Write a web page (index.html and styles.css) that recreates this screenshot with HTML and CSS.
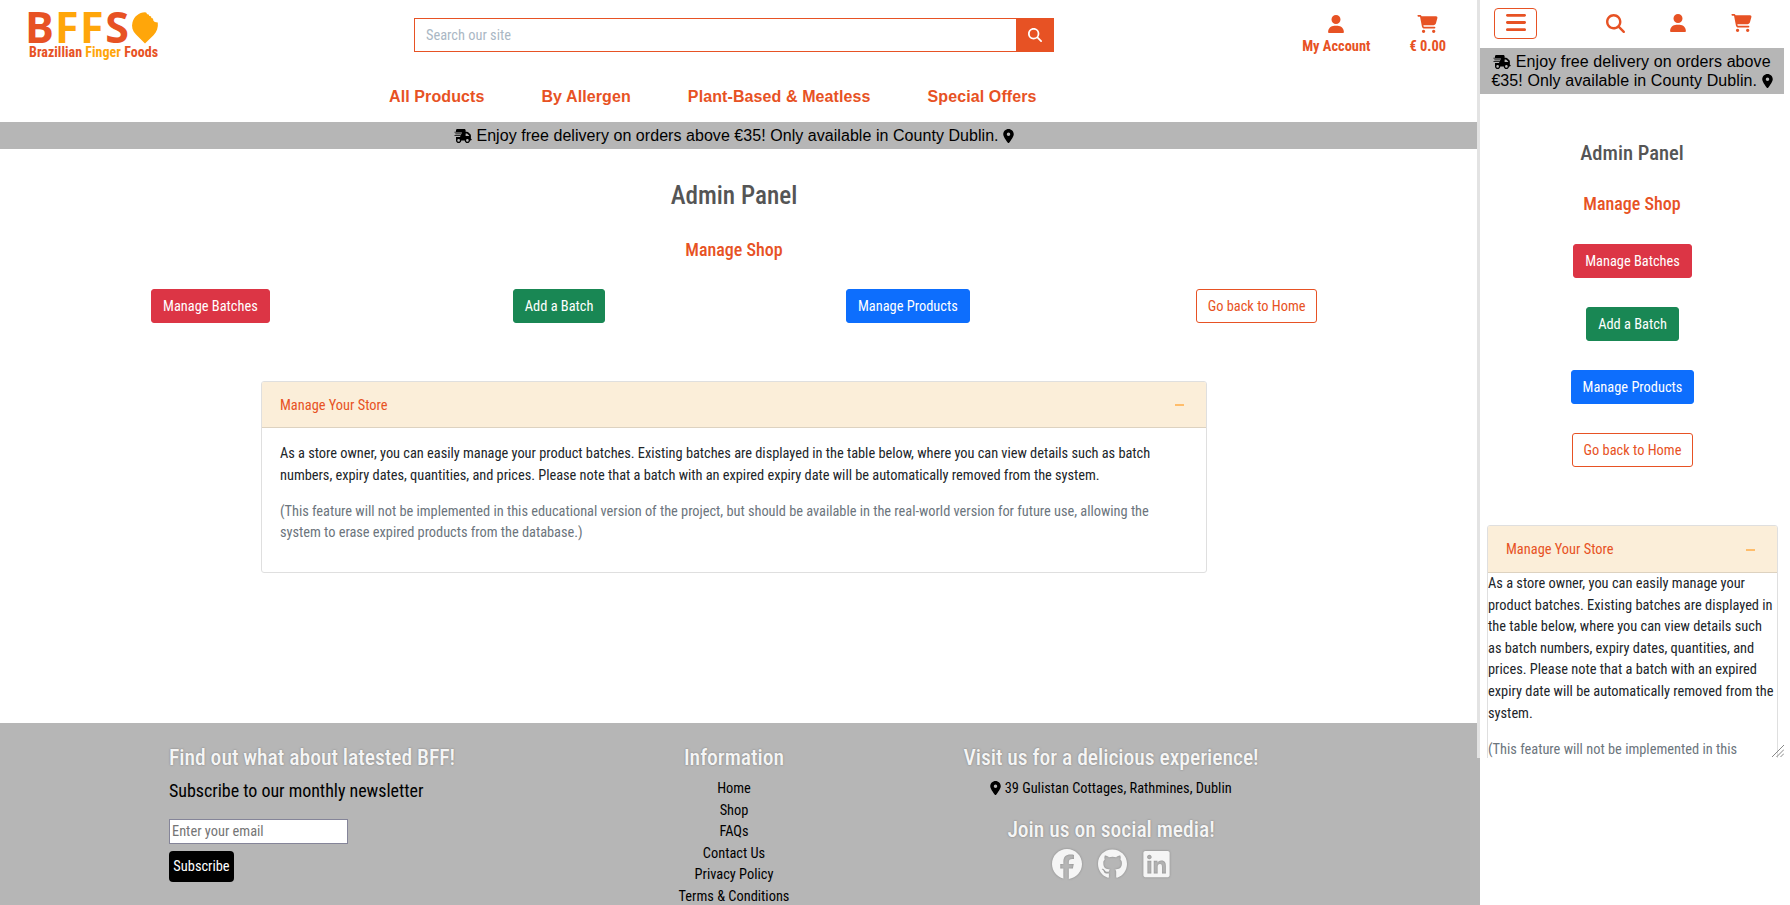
FILE: index.html
```html
<!DOCTYPE html>
<html lang="en">
<head>
<meta charset="utf-8">
<title>Admin Panel - Brazillian Finger Foods</title>
<link rel="stylesheet" href="styles.css">
</head>
<body>
<svg class="sprite" aria-hidden="true">
  <symbol id="user" viewBox="0 0 448 512"><path d="M224 256A128 128 0 1 0 224 0a128 128 0 1 0 0 256zm-45.700 48C79.800 304 0 383.800 0 482.300C0 498.700 13.300 512 29.700 512H418.300c16.400 0 29.700-13.300 29.700-29.700C448 383.800 368.200 304 269.700 304H178.300z"/></symbol>
  <symbol id="cart" viewBox="0 0 576 512"><path d="M0 24C0 10.700 10.700 0 24 0H69.500c22 0 41.500 12.800 50.600 32h411c26.300 0 45.500 25 38.600 50.400l-41 152.300c-8.500 31.400-37 53.300-69.500 53.300H170.700l5.400 28.500c2.200 11.300 12.100 19.500 23.600 19.500H488c13.300 0 24 10.700 24 24s-10.700 24-24 24H199.700c-34.600 0-64.300-24.600-70.700-58.500L77.400 54.500c-.7-3.800-4-6.500-7.900-6.500H24C10.700 48 0 37.300 0 24zM128 464a48 48 0 1 1 96 0 48 48 0 1 1 -96 0zm336-48a48 48 0 1 1 0 96 48 48 0 1 1 0-96z"/></symbol>
  <symbol id="search" viewBox="0 0 512 512"><path d="M416 208c0 45.900-14.900 88.300-40 122.700L502.600 457.400c12.500 12.500 12.500 32.800 0 45.300s-32.800 12.500-45.300 0L330.700 376c-34.400 25.200-76.800 40-122.700 40C93.100 416 0 322.900 0 208S93.100 0 208 0S416 93.100 416 208zM208 352a144 144 0 1 0 0-288 144 144 0 1 0 0 288z"/></symbol>
  <symbol id="bars" viewBox="0 0 448 512"><path d="M0 96C0 78.300 14.300 64 32 64H416c17.700 0 32 14.300 32 32s-14.300 32-32 32H32C14.300 128 0 113.700 0 96zM0 256c0-17.700 14.300-32 32-32H416c17.700 0 32 14.300 32 32s-14.300 32-32 32H32c-17.700 0-32-14.300-32-32zM448 416c0 17.700-14.300 32-32 32H32c-17.700 0-32-14.300-32-32s14.300-32 32-32H416c17.700 0 32 14.300 32 32z"/></symbol>
  <symbol id="pin" viewBox="0 0 384 512"><path d="M215.700 499.200C267 435 384 279.400 384 192C384 86 298 0 192 0S0 86 0 192c0 87.400 117 243 168.300 307.200c12.300 15.300 35.100 15.300 47.400 0zM192 128a64 64 0 1 1 0 128 64 64 0 1 1 0-128z"/></symbol>
  <symbol id="truck" viewBox="0 0 640 512"><path d="M112 0C85.500 0 64 21.500 64 48V96H16c-8.800 0-16 7.200-16 16s7.200 16 16 16H272c8.800 0 16 7.200 16 16s-7.200 16-16 16H48c-8.800 0-16 7.200-16 16s7.200 16 16 16H240c8.800 0 16 7.200 16 16s-7.200 16-16 16H16c-8.800 0-16 7.200-16 16s7.200 16 16 16H208c8.800 0 16 7.200 16 16s-7.200 16-16 16H64V416c0 53 43 96 96 96s96-43 96-96H384c0 53 43 96 96 96s96-43 96-96h32c17.700 0 32-14.300 32-32s-14.300-32-32-32V237.300c0-17-6.700-33.300-18.700-45.300L512 114.700c-12-12-28.300-18.700-45.300-18.700H416V48c0-26.500-21.500-48-48-48H112zM544 237.300V256H416V160h50.700L544 237.300zM160 368a48 48 0 1 1 0 96 48 48 0 1 1 0-96zm272 48a48 48 0 1 1 96 0 48 48 0 1 1 -96 0z"/></symbol>
  <symbol id="facebook" viewBox="0 0 512 512"><path d="M512 256C512 114.600 397.400 0 256 0S0 114.600 0 256C0 376 82.700 476.800 194.200 504.500V334.200H141.400V256h52.800V222.300c0-87.100 39.400-127.500 125-127.500c16.200 0 44.200 3.200 55.700 6.400V172c-6-.6-16.500-1-29.600-1c-42 0-58.200 15.900-58.200 57.200V256h83.600l-14.400 78.200H287V510.100C413.800 494.800 512 386.900 512 256z"/></symbol>
  <symbol id="github" viewBox="0 0 496 512"><path d="M244.800 8C106.100 8 0 113.300 0 252c0 110.900 69.800 205.800 169.500 239.200 12.800 2.300 17.300-5.600 17.300-12.100 0-6.200-.3-40.400-.3-61.400 0 0-70 15-84.700-29.800 0 0-11.400-29.100-27.800-36.600 0 0-22.900-15.700 1.600-15.400 0 0 24.900 2 38.600 25.800 21.900 38.600 58.600 27.500 72.900 20.900 2.300-16 8.800-27.100 16-33.700-55.900-6.200-112.300-14.300-112.300-110.500 0-27.500 7.600-41.300 23.600-58.900-2.600-6.500-11.100-33.300 2.600-67.900 20.900-6.500 69 27 69 27 20-5.600 41.500-8.500 62.800-8.500s42.800 2.900 62.800 8.500c0 0 48.100-33.600 69-27 13.700 34.700 5.200 61.400 2.600 67.900 16 17.700 25.800 31.500 25.800 58.900 0 96.500-58.900 104.200-114.800 110.500 9.200 7.900 17 22.900 17 46.400 0 33.700-.3 75.400-.3 83.600 0 6.500 4.600 14.400 17.300 12.100C428.200 457.800 496 362.900 496 252 496 113.300 383.500 8 244.800 8z"/></symbol>
  <symbol id="linkedin" viewBox="0 0 448 512"><path d="M416 32H31.900C14.300 32 0 46.500 0 64.300v383.400C0 465.500 14.300 480 31.900 480H416c17.600 0 32-14.500 32-32.300V64.300c0-17.800-14.400-32.300-32-32.300zM135.400 416H69V202.200h66.500V416zm-33.200-243c-21.300 0-38.500-17.300-38.500-38.500S80.900 96 102.200 96c21.200 0 38.500 17.300 38.500 38.500 0 21.300-17.200 38.500-38.500 38.500zm282.100 243h-66.400V312c0-24.800-.5-56.700-34.500-56.700-34.600 0-39.900 27-39.900 54.900V416h-66.400V202.200h63.700v29.200h.9c8.900-16.800 30.600-34.500 62.900-34.500 67.200 0 79.700 44.300 79.700 101.900V416z"/></symbol>
</svg>

<div class="desktop">
  <header class="topbar">
    <svg class="logo" width="138" height="62" viewBox="0 0 138 62">
      <g class="logo-word"><text x="1.100" y="43" class="red">B</text><text x="31.100" y="43" class="gold">F</text><text x="56.100" y="43" class="gold">F</text><text x="81.200" y="43" class="red">S</text></g>
      <path class="gold" d="M121 12.300c1.300 0 1.800.8 2 2 1.400-.2 2 .5 2.300 1.700 1.500-.3 2.200.6 2 2 1.500 0 2.100.7 1.900 2.200.8 1.500 2.200 2.200 4.600 2.300.6 5-1 9.300-4.300 12.700L121 43.500 112 34.600c-3.600-3.600-4.700-7.900-3.500-12.300 1.600-5.900 6.500-9.700 12.500-10z"/>
      <text x="5" y="57" class="logo-sub" textLength="129"><tspan class="red">Brazillian </tspan><tspan class="gold">Finger </tspan><tspan class="red">Foods</tspan></text>
    </svg>
    <div class="searchbox"><span class="ph">Search our site</span><span class="searchbtn"><svg class="ic" width="14" height="14"><use href="#search"/></svg></span></div>
    <div class="tools">
      <a class="tool"><svg width="16" height="18"><use href="#user"/></svg><span>My Account</span></a>
      <a class="tool"><svg width="21" height="18"><use href="#cart"/></svg><span>€ 0.00</span></a>
    </div>
  </header>
  <nav class="nav"><a>All Products</a><a>By Allergen</a><a>Plant-Based &amp; Meatless</a><a>Special Offers</a></nav>
  <div class="banner"><svg width="18" height="14"><use href="#truck"/></svg> Enjoy free delivery on orders above €35! Only available in County Dublin. <svg width="11" height="14"><use href="#pin"/></svg></div>
  <main class="main">
    <h1>Admin Panel</h1>
    <h2>Manage Shop</h2>
    <div class="actions">
      <a class="btn danger">Manage Batches</a><a class="btn success">Add a Batch</a><a class="btn primary">Manage Products</a><a class="btn outline">Go back to Home</a>
    </div>
    <section class="accordion">
      <div class="acc-head"><span>Manage Your Store</span><i class="minus"></i></div>
      <div class="acc-body">
        <p>As a store owner, you can easily manage your product batches. Existing batches are displayed in the table below, where you can view details such as batch numbers, expiry dates, quantities, and prices. Please note that a batch with an expired expiry date will be automatically removed from the system.</p>
        <p class="muted">(This feature will not be implemented in this educational version of the project, but should be available in the real-world version for future use, allowing the system to erase expired products from the database.)</p>
      </div>
    </section>
  </main>
  <footer class="footer">
    <div class="news">
      <h3>Find out what about latested BFF!</h3>
      <p class="lead">Subscribe to our monthly newsletter</p>
      <div class="email">Enter your email</div>
      <a class="subscribe">Subscribe</a>
    </div>
    <div class="info">
      <h3>Information</h3>
      <a>Home</a><a>Shop</a><a>FAQs</a><a>Contact Us</a><a>Privacy Policy</a><a>Terms &amp; Conditions</a>
    </div>
    <div class="visit">
      <h3>Visit us for a delicious experience!</h3>
      <p class="address"><svg width="11" height="14"><use href="#pin"/></svg> 39 Gulistan Cottages, Rathmines, Dublin</p>
      <h3 class="join">Join us on social media!</h3>
      <div class="social"><svg width="30" height="30"><use href="#facebook"/></svg><svg width="29" height="30"><use href="#github"/></svg><svg width="27" height="30"><use href="#linkedin"/></svg></div>
    </div>
  </footer>
</div>

<div class="mobile">
  <header class="m-top">
    <span class="toggler"><svg width="20" height="23"><use href="#bars"/></svg></span>
    <div class="m-tools"><svg width="19" height="19"><use href="#search"/></svg><svg width="16" height="18"><use href="#user"/></svg><svg width="21" height="18"><use href="#cart"/></svg></div>
  </header>
  <div class="m-banner"><svg width="18" height="14"><use href="#truck"/></svg> Enjoy free delivery on orders above<br>€35! Only available in County Dublin. <svg width="11" height="14"><use href="#pin"/></svg></div>
  <h1>Admin Panel</h1>
  <h2>Manage Shop</h2>
  <div class="m-actions">
    <a class="btn danger">Manage Batches</a><a class="btn success">Add a Batch</a><a class="btn primary">Manage Products</a><a class="btn outline">Go back to Home</a>
  </div>
  <section class="accordion">
    <div class="acc-head"><span>Manage Your Store</span><i class="minus"></i></div>
    <div class="acc-body">
      <p>As a store owner, you can easily manage your product batches. Existing batches are displayed in the table below, where you can view details such as batch numbers, expiry dates, quantities, and prices. Please note that a batch with an expired expiry date will be automatically removed from the system.</p>
      <p class="muted">(This feature will not be implemented in this</p>
    </div>
  </section>
  <svg class="grip" width="12" height="12"><path d="M0 12L12 0M4.500 12L12 4.500M8.500 12L12 8.500"/></svg>
</div>
</body>
</html>
```
FILE: styles.css
```css
* { box-sizing: border-box; margin: 0; padding: 0; }
body { width: 1790px; height: 905px; overflow: hidden; position: relative; background: #fff; color: #212529; font: 14.4px/21.6px "Roboto Condensed", Roboto, sans-serif; font-stretch: 75%; }
svg { fill: currentColor; }
.sprite { position: absolute; width: 0; height: 0; }
.desktop { width: 1480px; height: 905px; overflow: hidden; display: flex; flex-direction: column; }
.desktop > * { flex-shrink: 0; }
.topbar { height: 75px; display: grid; grid-template-columns: 390px 640px 1fr; align-items: start; padding-left: 24px; }
.logo { display: block; overflow: visible; }
.logo-word { font: 700 43px "Open Sans", sans-serif; }
.logo-sub { font-size: 14px; font-weight: 700; }
.red { fill: #e75224; }
.gold { fill: #ffa60a; }
.searchbox { margin-top: 18px; height: 34px; border: 1px solid #e75224; display: flex; justify-content: space-between; align-items: center; padding-left: 11px; color: #aab7c4; }
.ph { padding-top: 1px; }
.searchbtn { width: 37px; height: 34px; background: #e75224; color: #fff; display: flex; align-items: center; justify-content: center; }
.tools { display: flex; justify-content: flex-end; gap: 39px; padding: 15px 34px 0 0; color: #e75224; font-weight: 700; }
.tool { display: flex; flex-direction: column; align-items: center; line-height: 22px; gap: 3px; }
.tool svg { display: block; }
.nav { height: 47px; padding: 11px 0 0 389px; display: flex; gap: 57px; font: 700 16px/22px "Liberation Sans", Arial, sans-serif; letter-spacing: .1px; color: #e75224; }
.banner { height: 27px; padding-right: 12px; background: #b6b6b6; color: #000; text-align: center; font: 16px/27px "Liberation Sans", Arial, sans-serif; letter-spacing: .05px; }
.banner svg, .m-banner svg, .address svg { vertical-align: -2px; }
.main { height: 574px; padding-right: 12px; background: #fff; text-align: center; }
h1, h2, h3 { font-weight: 500; }
h1 { color: #555; }
h2 { color: #e75224; }
.main h1 { font-size: 25.2px; line-height: 30px; padding-top: 32px; }
.main h2 { font-size: 18px; line-height: 22px; margin-top: 28px; }
.actions { display: grid; grid-template-columns: repeat(4, 1fr); justify-items: center; margin: 28px 0 58px; padding: 0 37px 0 36px; }
.btn { height: 34px; padding: 1px 10.8px 0; border-radius: 3px; border: 1px solid; line-height: 32px; color: #fff; }
.danger { background: #dc3545; border-color: #dc3545; }
.success { background: #198754; border-color: #198754; }
.primary { background: #0d6efd; border-color: #0d6efd; }
.outline { color: #e75224; border-color: #e75224; }
.accordion { border: 1px solid #dfdfdf; border-radius: 3px; text-align: left; }
.main .accordion { width: 946px; height: 192px; margin-left: 261px; }
.acc-head { height: 46px; background: #fbeed9; color: #e75224; border-bottom: 1px solid #ddd2c0; padding: 0 22px 0 18px; display: flex; align-items: center; justify-content: space-between; border-radius: 2px 2px 0 0; }
.acc-head span { padding-top: 3px; }
.minus { width: 9px; height: 2px; margin-top: 1px; background: #ffbd6b; }
.acc-body { padding: 15.2px 18px 0; }
.main .acc-body { letter-spacing: -.025px; }
.acc-body p + p { margin-top: 14.4px; }
.muted { color: #6c757d; }
.footer { height: 182px; background: #b6b6b6; color: #000; display: grid; grid-template-columns: 489px 490px 264px; align-items: start; }
.footer h3 { color: #f5f5f5; font-size: 21.6px; line-height: 24px; letter-spacing: -.03px; text-shadow: 0 0 2px #777; white-space: nowrap; }
.footer > div { padding-top: 23px; }
.news { padding-left: 169px; }
.lead { font-size: 18px; line-height: 26px; margin-top: 8px; letter-spacing: -.03px; white-space: nowrap; }
.email { width: 179px; height: 25px; margin-top: 15px; border: 1px solid #858599; background: #fff; color: #757575; line-height: 23px; padding-left: 2px; }
.subscribe { display: block; width: 65px; height: 31px; margin-top: 7px; border-radius: 4px; background: #000; color: #fff; text-align: center; line-height: 31px; }
.info, .visit { display: flex; flex-direction: column; align-items: center; }
.info h3, .visit h3:first-child { margin-bottom: 8px; }
.footer .join { margin-top: 18px; }
.social { display: flex; gap: 16px; margin-top: 7px; color: #f5f5f5; filter: drop-shadow(0 0 1px #888); }
.mobile { position: absolute; top: 0; left: 1477px; width: 313px; height: 758px; overflow: hidden; background: #fff; border-left: 3px solid #e3e3e3; padding-right: 6px; text-align: center; }
.m-top { height: 48px; display: flex; justify-content: space-between; align-items: flex-start; padding: 8px 32px 0 14px; color: #e75224; }
.toggler { width: 43px; height: 31px; border: 1px solid; border-radius: 4px; display: flex; align-items: center; justify-content: center; }
.toggler svg { margin-top: -2px; }
.m-tools { display: flex; gap: 45px; padding-top: 6px; }
.m-banner { height: 46px; padding-top: 4px; background: #b6b6b6; color: #000; font: 16px/19px "Liberation Sans", Arial, sans-serif; letter-spacing: .09px; white-space: nowrap; }
.mobile h1 { font-size: 20.6px; line-height: 24px; margin-top: 47px; }
.mobile h2 { font-size: 18px; line-height: 22px; margin-top: 28px; }
.m-actions { display: flex; flex-direction: column; align-items: center; gap: 29px; margin: 29px 0 58px; padding-left: 1px; }
.mobile .accordion { width: 291px; height: 300px; margin-left: 7px; }
.mobile .acc-head { height: 47px; }
.mobile .acc-head span { padding-top: 1px; }
.mobile .acc-body { padding: 0; }
.grip { position: absolute; right: 6px; bottom: 1px; stroke: #888; fill: none; }
```
